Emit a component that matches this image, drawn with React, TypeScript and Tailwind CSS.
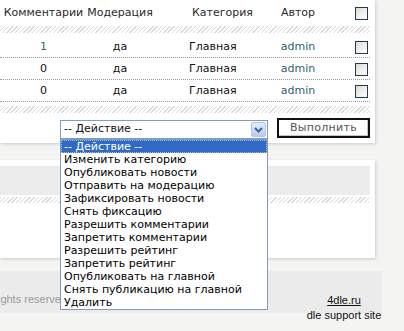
import React from "react";

const hatch =
  "bg-[repeating-linear-gradient(135deg,#d9d9d9_0px,#d9d9d9_1px,#ffffff_1px,#ffffff_3px)]";

function Check() {
  return (
    <div className="w-[13px] h-[13px] border border-[#1f3b4d] bg-[linear-gradient(135deg,#dcdcd6,#ffffff)]" />
  );
}

const rows = [
  { c: "1", link: true },
  { c: "0", link: false },
  { c: "0", link: false },
];

const options = [
  "-- Действие --",
  "Изменить категорию",
  "Опубликовать новости",
  "Отправить на модерацию",
  "Зафиксировать новости",
  "Снять фиксацию",
  "Разрешить комментарии",
  "Запретить комментарии",
  "Разрешить рейтинг",
  "Запретить рейтинг",
  "Опубликовать на главной",
  "Снять публикацию на главной",
  "Удалить",
];

export default function App() {
  return (
    <div
      className="w-[404px] h-[331px] overflow-hidden bg-[#f4f4f2] text-[11px] text-[#222] relative"
      style={{ fontFamily: '"DejaVu Sans", Verdana, sans-serif' }}
    >
      <div className="w-[375px] flex flex-col">
        {/* Panel 1 */}
        <div className="bg-white h-[143px] flex flex-col shadow-[1px_1px_3px_rgba(0,0,0,0.18)]">
          <div className="h-[26px] flex items-center text-[#2a2a2a]">
            <div className="w-[87px] text-center">Комментарии</div>
            <div className="w-[66px] text-center">Модерация</div>
            <div className="w-[112px] pl-[39px]">Категория</div>
            <div className="w-[66px] text-center">Автор</div>
            <div className="pl-[24px]">
              <Check />
            </div>
          </div>
          <div className={`h-[7px] w-[370px] ${hatch}`} />
          <div className="mt-[3px] w-[370px] flex flex-col">
            {rows.map((r, i) => (
              <div
                key={i}
                className="h-[22px] pt-[2px] flex items-center border-b border-dotted border-[#9a9a9a]"
              >
                <div className={`w-[87px] text-center ${r.link ? "text-[#3b6b7c]" : "text-[#111]"}`}>
                  {r.c}
                </div>
                <div className="w-[66px] text-center text-[#111]">да</div>
                <div className="w-[112px] pl-[36px] text-[#111]">Главная</div>
                <div className="w-[66px] text-center text-[#2c5f72]">admin</div>
                <div className="pl-[24px]">
                  <Check />
                </div>
              </div>
            ))}
          </div>
          <div className={`mt-[4px] h-[7px] w-[370px] ${hatch}`} />
          <div className="mt-[5px] flex items-start">
            <div className="relative ml-[60px] mt-[2px] w-[208px] h-[19px] border border-[#7f9db9] bg-white flex items-center">
              <span className="pl-[3px] text-[#111]">-- Действие --</span>
              <div className="ml-auto mr-[1px] w-[15px] h-[15px] rounded-[2px] border border-[#b2c6ee] bg-[linear-gradient(180deg,#e3ecfd,#b5cbf6)] flex items-center justify-center">
                <svg width="9" height="6" viewBox="0 0 9 6">
                  <path d="M1 1 L4.5 4.5 L8 1" fill="none" stroke="#4d6185" strokeWidth="2" />
                </svg>
              </div>
              {/* open list */}
              <div className="absolute left-[-1px] top-[18px] w-[208px] border border-[#7f9db9] bg-white z-10 flex flex-col">
                {options.map((o, i) => (
                  <div
                    key={o}
                    className={
                      i === 0
                        ? "h-[13px] leading-[11px] pl-[2px] bg-[#316ac5] text-white border border-dotted border-[#a9bde6] whitespace-nowrap"
                        : "h-[13px] leading-[13px] pl-[3px] text-[#000] whitespace-nowrap"
                    }
                  >
                    {o}
                  </div>
                ))}
              </div>
            </div>
            <div className="ml-[9px] w-[93px] h-[20px] border-2 border-[#111] bg-white shadow-[inset_-1px_-1px_0_#c4c4c4] flex items-center justify-center text-[#555] tracking-[0.3px]">
              Выполнить
            </div>
          </div>
        </div>

        {/* Panel 2 */}
        <div className="mt-[17px] bg-white h-[98px] flex flex-col pt-[6px] shadow-[1px_1px_3px_rgba(0,0,0,0.18)]">
          <div className="h-[29px] w-[370px] bg-[#ececec]" />
          <div className={`mt-[2px] h-[6px] w-[370px] ${hatch}`} />
        </div>
      </div>

      {/* Footer */}
      <div
        className="mt-[13px] w-[382px] h-[42px] bg-[#ebebeb] flex items-start"
        style={{ fontFamily: '"Liberation Sans", Arial, sans-serif' }}
      >
        <div className="pt-[21px] leading-[15px] whitespace-nowrap text-[#9a9a9a] -ml-[21px]">
          All rights reserved.
        </div>
        <div className="ml-auto w-[76px] pt-[22px] leading-[15px] text-center text-[#111] flex flex-col">
          <span className="underline">4dle.ru</span>
          <span className="whitespace-nowrap">dle support site</span>
        </div>
      </div>
    </div>
  );
}
